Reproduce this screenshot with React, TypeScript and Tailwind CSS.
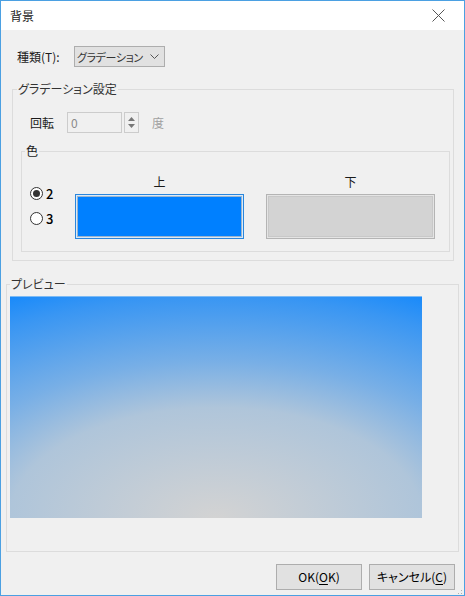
import React from "react";

const font = "[font-family:'Noto_Sans_CJK_JP','Noto_Sans',sans-serif] [font-feature-settings:'palt']";

function Swatch({ label, active, fill }: { label: string; active?: boolean; fill: string }) {
  return (
    <div className="flex flex-col items-center">
      <div className="h-[16px] leading-[16px] text-[12px] text-[#1a1a1a]">{label}</div>
      <div
        className={`mt-[4px] h-[45px] w-[169px] border p-[1px] ${active ? "border-[#2a86dc] bg-[#d8eafa]" : "border-[#b4b4b4] bg-[#e4e4e4]"}`}
      >
        <div className={`h-full w-full border ${active ? "border-[#9cb4cc]" : "border-[#c8c8c8]"} ${fill}`} />
      </div>
    </div>
  );
}

function Radio({ label, checked }: { label: string; checked?: boolean }) {
  return (
    <div className="flex h-[13px] items-center gap-[3px]">
      <div className="flex h-[13px] w-[13px] items-center justify-center rounded-full border border-[#333] bg-white">
        {checked && <div className="h-[7px] w-[7px] rounded-full bg-[#333]" />}
      </div>
      <span className="text-[13px] font-medium leading-none text-black">{label}</span>
    </div>
  );
}

export default function App() {
  return (
    <div className={`flex h-[596px] w-[465px] flex-col border border-[#4ba0e2] bg-[#f0f0f0] text-[12px] leading-[16px] text-[#1a1a1a] ${font}`}>
      {/* title bar */}
      <div className="flex h-[29px] shrink-0 items-center justify-between bg-white pl-[9px] pr-[19px]">
        <span className="text-[12px] text-[#222]">背景</span>
        <svg width="13" height="13" viewBox="0 0 13 13" className="text-[#555]">
          <path d="M0.5 0.5 L12.5 12.5 M12.5 0.5 L0.5 12.5" stroke="currentColor" strokeWidth="1" fill="none" />
        </svg>
      </div>

      <div className="flex flex-1 flex-col">
        {/* kind row */}
        <div className="mt-[16px] flex h-[21px] items-center pl-[16px]">
          <span className="w-[57px] whitespace-nowrap">種類(T):</span>
          <div className="flex h-[21px] w-[91px] items-center justify-between overflow-hidden border border-[#adadad] bg-[#e1e1e1] pl-[2px] pr-[5px]">
            <span className="whitespace-nowrap text-[11px] tracking-[-0.4px] text-[#333]">グラデーション</span>
            <svg width="9" height="6" viewBox="0 0 9 6" className="shrink-0">
              <path d="M0.5 0.5 L4.5 4.5 L8.5 0.5" stroke="#555" strokeWidth="1" fill="none" />
            </svg>
          </div>
        </div>

        {/* gradient settings */}
        <fieldset className="ml-[11px] mr-[10px] mt-[14px] border border-[#dcdcdc]">
          <legend className="ml-[4px] px-[1px] text-[#333]">グラデーション設定</legend>
          <div className="mt-[15px] flex h-[21px] items-center pl-[17px]">
            <span className="w-[37px]">回転</span>
            <div className="flex h-[21px] w-[55px] items-center border border-[#cccccc] bg-[#f0f0f0] pl-[3px] text-[#8a8a8a]">0</div>
            <div className="ml-[2px] flex h-[21px] w-[15px] flex-col items-center justify-center gap-[3px] border border-[#cccccc] bg-[#f0f0f0]">
              <svg width="7" height="4" viewBox="0 0 7 4"><path d="M0 4 L3.5 0 L7 4 Z" fill="#777" /></svg>
              <svg width="7" height="4" viewBox="0 0 7 4"><path d="M0 0 L3.5 4 L7 0 Z" fill="#777" /></svg>
            </div>
            <span className="ml-[13px] text-[#a0a0a0]">度</span>
          </div>

          <fieldset className="mb-[8px] ml-[8px] mr-[3px] mt-[10px] border border-[#dcdcdc]">
            <legend className="ml-[3px] px-[1px] text-[#1a1a1a]">色</legend>
            <div className="mb-[12px] mt-[15px] flex items-end pl-[8px]">
              <div className="mb-[14px] flex w-[45px] flex-col gap-[12px]">
                <Radio label="2" checked />
                <Radio label="3" />
              </div>
              <div className="flex gap-[22px]">
                <Swatch label="上" active fill="bg-[#0080ff]" />
                <Swatch label="下" fill="bg-[#d3d3d3]" />
              </div>
            </div>
          </fieldset>
        </fieldset>

        {/* preview */}
        <fieldset className="ml-[5px] mr-[5px] mt-[15px] border border-[#dcdcdc]">
          <legend className="ml-[3px] px-[1px] text-[#333]">プレビュー</legend>
          <div className="mb-[33px] ml-[3px] mt-[4px] h-[222px] w-[412px] border-t border-[#7cbaf4] bg-[radial-gradient(ellipse_100%_100%_at_50%_100%,#d3d3d3_0%,#afc5da_50%,#78afe6_71%,#3996f3_100%,#198afa_112%,#0a84fd_120%)]" />
        </fieldset>

        {/* buttons */}
        <div className="mr-[9px] mt-[12px] flex justify-end gap-[7px]">
          <button type="button" className="flex h-[26px] w-[86px] items-center justify-center border border-[#adadad] bg-[#e1e1e1] text-black">
            OK(<span className="underline underline-offset-2">O</span>K)
          </button>
          <button type="button" className="flex h-[26px] w-[86px] items-center justify-center border border-[#adadad] bg-[#e1e1e1] text-black">
            キャンセル(<span className="underline underline-offset-2">C</span>)
          </button>
        </div>

        <div className="mt-auto flex justify-end pb-[1px] pr-[1px]">
          <svg width="8" height="8" viewBox="0 0 8 8">
            <rect x="6" y="0" width="1" height="1" fill="#b0b0b0" />
            <rect x="3" y="3" width="1" height="1" fill="#b0b0b0" />
            <rect x="6" y="3" width="1" height="1" fill="#b0b0b0" />
            <rect x="0" y="6" width="1" height="1" fill="#b0b0b0" />
            <rect x="3" y="6" width="1" height="1" fill="#b0b0b0" />
            <rect x="6" y="6" width="1" height="1" fill="#b0b0b0" />
          </svg>
        </div>
      </div>
    </div>
  );
}
